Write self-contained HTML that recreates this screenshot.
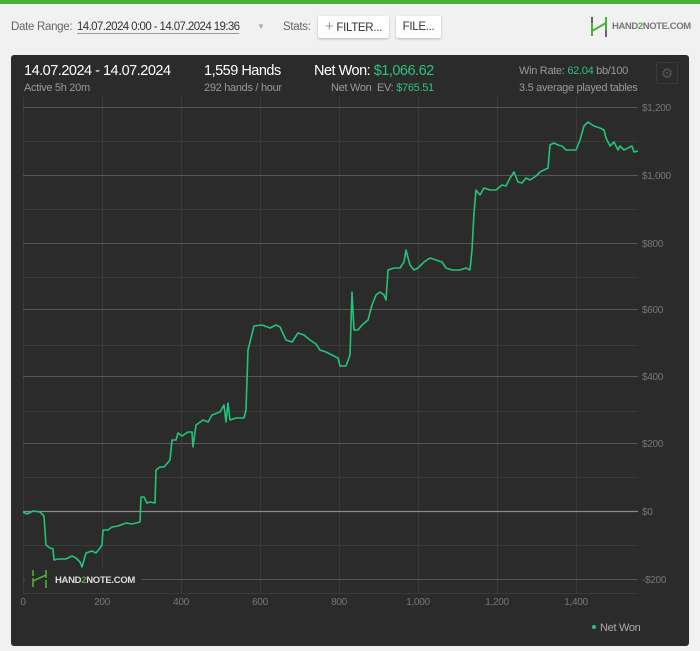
<!DOCTYPE html>
<html><head><meta charset="utf-8"><style>
body{margin:0;width:700px;height:651px;background:#f1f1f1;font-family:"Liberation Sans",sans-serif;overflow:hidden;position:relative}
.top{position:absolute;left:0;top:0;width:700px;height:4px;background:#4caf3a}
.t{position:absolute;white-space:nowrap;letter-spacing:-0.3px}
.btn{position:absolute;top:16px;height:22px;background:#fff;border-radius:2px;box-shadow:0 1px 2px rgba(0,0,0,.25);font-size:11.5px;color:#333;line-height:22px;text-align:center;letter-spacing:-0.3px}
.panel{position:absolute;left:11px;top:55px;width:678px;height:591px;background:#2b2b2b;border-radius:3px}
.g{color:#2ec27e}
</style></head><body>
<div class="top"></div>
<div class="t" style="left:11px;top:21px;font-size:11.5px;color:#666">Date Range:</div>
<div class="t" style="left:77px;top:21px;font-size:11.5px;color:#333;border-bottom:1px solid #999;letter-spacing:-0.6px">14.07.2024 0:00 - 14.07.2024 19:36</div>
<div class="t" style="left:257px;top:22px;font-size:8px;color:#aaa">▼</div>
<div class="t" style="left:283px;top:21px;font-size:11.5px;color:#666">Stats:</div>
<div class="btn" style="left:318px;width:71px"><span style="color:#999;font-size:15px">+</span> FILTER...</div>
<div class="btn" style="left:396px;width:45px">FILE...</div>
<svg style="position:absolute;left:590px;top:17px" width="18" height="20"><path d="M2 0v7M2 7v12M2 14L16 6M16 0v7M16 7v12" stroke="#4caf3a" stroke-width="2" fill="none"/><path d="M2 0v6M16 13v7" stroke="#666" stroke-width="2"/></svg>
<div class="t" style="left:612px;top:21px;font-size:9.5px;font-weight:bold;color:#777;letter-spacing:-0.4px">HAND<span style="color:#4caf3a">2</span>NOTE.COM</div>
<div class="panel"></div>
<div class="t" style="left:24px;top:63px;font-size:14.5px;color:#fff;letter-spacing:-0.5px">14.07.2024 - 14.07.2024</div>
<div class="t" style="left:24px;top:82px;font-size:11px;color:#999">Active 5h 20m</div>
<div class="t" style="left:204px;top:63px;font-size:14.5px;color:#fff;letter-spacing:-0.5px">1,559 Hands</div>
<div class="t" style="left:204px;top:82px;font-size:11px;color:#999">292 hands / hour</div>
<div class="t" style="left:314px;top:63px;font-size:14.5px;color:#fff;letter-spacing:-0.5px">Net Won: <span class="g">$1,066.62</span></div>
<div class="t" style="left:331px;top:82px;font-size:11px;color:#999">Net Won&nbsp; EV: <span class="g">$765.51</span></div>
<div class="t" style="left:519px;top:65px;font-size:11px;color:#999">Win Rate: <span class="g">62.04</span> bb/100</div>
<div class="t" style="left:519px;top:82px;font-size:11px;color:#999">3.5 average played tables</div>
<div style="position:absolute;left:656px;top:62px;width:20px;height:20px;border:1px solid #3a3a3a;border-radius:2px;color:#555;font-size:14px;text-align:center;line-height:20px">⚙</div>
<svg style="position:absolute;left:0;top:0" width="700" height="651">
<g stroke="#3a3a3a" stroke-width="1">
<path d="M23.5 96V593M102.5 96V593M181.5 96V593M260.5 96V593M339.5 96V593M418.5 96V593M497.5 96V593M576.5 96V593"/>
<path d="M23 141.5H638M23 209.5H638M23 277.5H638M23 345.5H638M23 411.5H638M23 477.5H638M23 545.5H638M23 593.5H638"/>
</g>
<g stroke="#575757" stroke-width="1"><path d="M23 107.5H638M23 175.5H638M23 243.5H638M23 309.5H638M23 376.5H638M23 443.5H638M23 579.5H638"/></g>
<path d="M23 511.5H638" stroke="#8a8a8a" stroke-width="1.2"/>
<g font-size="10" fill="#777" font-family="Liberation Sans,sans-serif" letter-spacing="-0.3">
<text x="642" y="111">$1,200</text><text x="642" y="179">$1,000</text><text x="642" y="247">$800</text><text x="642" y="313">$600</text><text x="642" y="380">$400</text><text x="642" y="447">$200</text><text x="642" y="515">$0</text><text x="642" y="583">-$200</text>
<g text-anchor="middle"><text x="23" y="605">0</text><text x="102" y="605">200</text><text x="181" y="605">400</text><text x="260" y="605">600</text><text x="339" y="605">800</text><text x="418" y="605">1,000</text><text x="497" y="605">1,200</text><text x="576" y="605">1,400</text></g>
</g>
<rect x="25" y="568" width="117" height="22" fill="#2b2b2b"/>
<path d="M33 570v6M33 578v9M33 581L46 575M46 570v8M46 580v8" stroke="#4caf3a" stroke-width="1.6" fill="none"/>
<text x="55" y="583" font-size="9.5" font-weight="bold" fill="#ddd" font-family="Liberation Sans,sans-serif" letter-spacing="-0.3">HAND<tspan fill="#4caf3a">2</tspan>NOTE.COM</text>
<polyline fill="none" stroke="#22c47a" stroke-width="1.6" stroke-linejoin="round" points="23,512 27,514 33,511 40,512 44,516 46,545 50,548 53,549 54,560 58,559 66,559 68,558 72,556 76,558 80,562 82,567 86,553 92,551 96,553 100,548 102,545 103,530 108,530 112,527 118,526 126,523 132,524 140,522 141,497 144,497 147,503 150,502 155,503 156,470 160,467 164,467 170,460 172,440 176,440 178,433 182,436 188,432 192,432 193,447 196,425 203,420 208,422 212,415 220,412 224,405 226,422 228,403 230,420 236,418 244,418 246,410 248,350 254,326 262,325 270,328 276,325 280,327 286,340 292,342 298,333 304,335 310,340 316,344 320,350 326,352 332,355 338,358 340,366 346,366 350,355 352,292 354,330 358,330 362,325 368,320 372,305 376,295 380,292 384,295 386,300 388,270 394,268 400,268 404,262 406,250 410,265 414,270 418,268 424,262 430,258 436,260 442,262 446,268 452,270 460,270 466,268 470,270 472,250 474,213 476,190 480,195 484,188 490,190 496,190 502,185 506,186 510,178 514,172 518,182 522,183 526,178 530,180 536,176 540,172 544,170 548,168 550,145 554,143 558,145 562,146 566,150 572,150 576,150 580,140 584,126 588,122 594,126 600,128 604,130 606,138 610,146 614,142 618,150 620,146 624,150 628,148 632,146 634,152 638,151"/>
<circle cx="594" cy="627" r="2" fill="#22c47a"/>
<text x="600" y="631" font-size="11" fill="#aaa" font-family="Liberation Sans,sans-serif" letter-spacing="-0.3">Net Won</text>
</svg>
</body></html>
